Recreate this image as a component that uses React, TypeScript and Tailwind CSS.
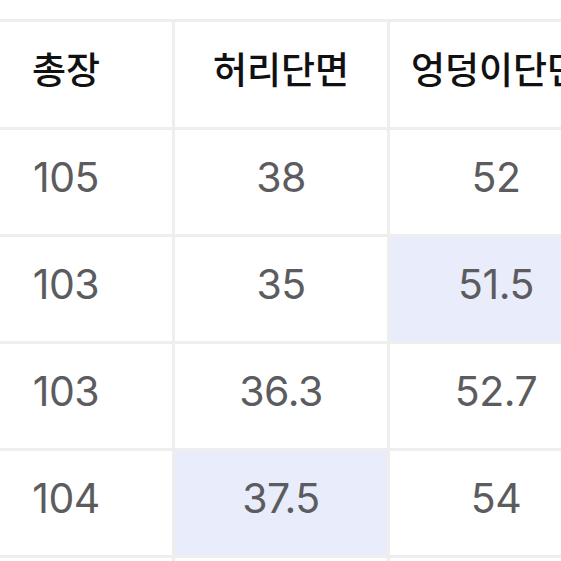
import React from 'react';

type Cell = { text: string; hl?: boolean };

const header = ['총장', '허리단면', '엉덩이단면', '허벅지단면'];

const rows: Cell[][] = [
  [{ text: '105' }, { text: '38' }, { text: '52' }, { text: '33' }],
  [{ text: '103' }, { text: '35' }, { text: '51.5', hl: true }, { text: '32' }],
  [{ text: '103' }, { text: '36.3' }, { text: '52.7' }, { text: '33' }],
  [{ text: '104' }, { text: '37.5', hl: true }, { text: '54' }, { text: '34' }],
  [{ text: '105' }, { text: '38' }, { text: '53' }, { text: '33' }],
];

export default function App() {
  return (
    <div className="w-[561px] h-[561px] overflow-hidden bg-white">
      <div className="pt-[19px] ml-[-40px]">
        <div className="grid grid-cols-[212px_212px_212px_212px] gap-[3px] pt-[3px] bg-[#eeeeee] w-max">
          {header.map((h) => (
            <div
              key={h}
              className="h-[105px] bg-white flex items-center justify-center pb-[12px] text-[37px] text-[#111111] font-medium font-['Noto_Sans_CJK_KR',sans-serif]"
            >
              {h}
            </div>
          ))}
          {rows.map((row, i) =>
            row.map((c, j) => (
              <div
                key={`${i}-${j}`}
                className={
                  'h-[104px] flex items-center justify-center pb-[8px] text-[41px] text-[#5c5c5f] font-[Inter,sans-serif] tracking-[-0.5px] ' +
                  (c.hl ? 'bg-[#e9ecfb]' : 'bg-white')
                }
              >
                {c.text}
              </div>
            ))
          )}
        </div>
      </div>
    </div>
  );
}
